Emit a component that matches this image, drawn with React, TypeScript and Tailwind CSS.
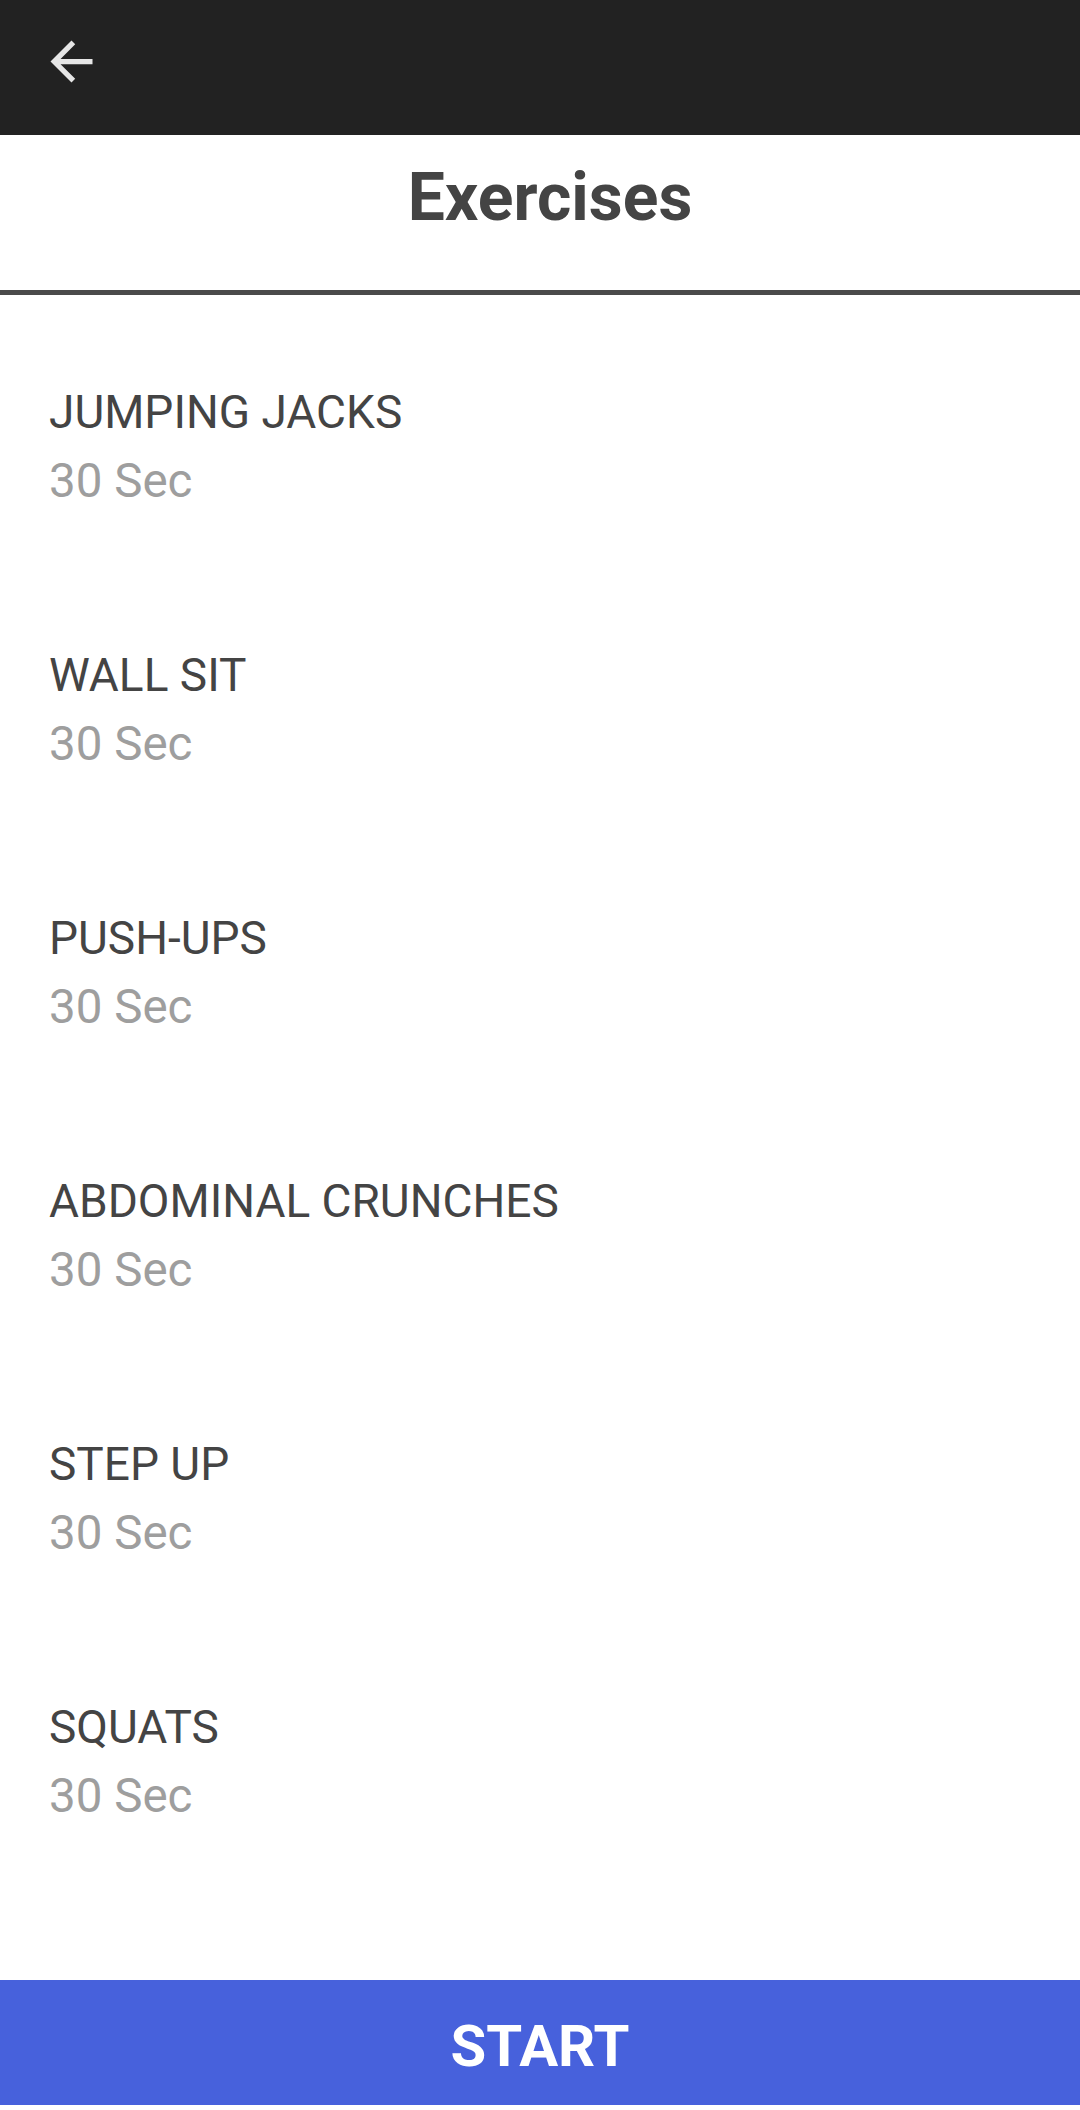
import React from "react";

const items = ["JUMPING JACKS", "WALL SIT", "PUSH-UPS", "ABDOMINAL CRUNCHES", "STEP UP", "SQUATS"];

export default function App() {
  return (
    <div className="flex h-[2110px] w-[1080px] flex-col bg-white" style={{ fontFamily: "Roboto, 'Noto Sans', sans-serif" }}>
      <div className="h-[135px] shrink-0 bg-[#222222] pl-[40px] pt-[30px]">
        <svg width="63" height="63" viewBox="0 0 24 24" fill="#e6e6e6">
          <path d="M20 11H7.83l5.59-5.59L12 4l-8 8 8 8 1.41-1.41L7.83 13H20v-2z" />
        </svg>
      </div>
      <div className="h-[155px] shrink-0 pl-[20px] pt-[22px] text-center text-[66px] font-bold leading-[81px] text-[#444444]">
        Exercises
      </div>
      <div className="h-[5px] shrink-0 bg-[#4a4a4a]" />
      <div className="flex flex-1 flex-col gap-[125px] pl-[49px] pt-[83px]">
        {items.map((name) => (
          <div key={name} className="flex flex-col">
            <div className="text-[46px] leading-[69px] text-[#444444]">{name}</div>
            <div className="text-[47.5px] leading-[69px] text-[#9e9e9e]">30 Sec</div>
          </div>
        ))}
      </div>
      <div className="flex h-[125px] shrink-0 items-center justify-center bg-[#4761dc] pt-[6px] text-[58px] font-bold leading-[70px] text-white">
        START
      </div>
      <div className="h-[5px] shrink-0 bg-white" />
    </div>
  );
}
